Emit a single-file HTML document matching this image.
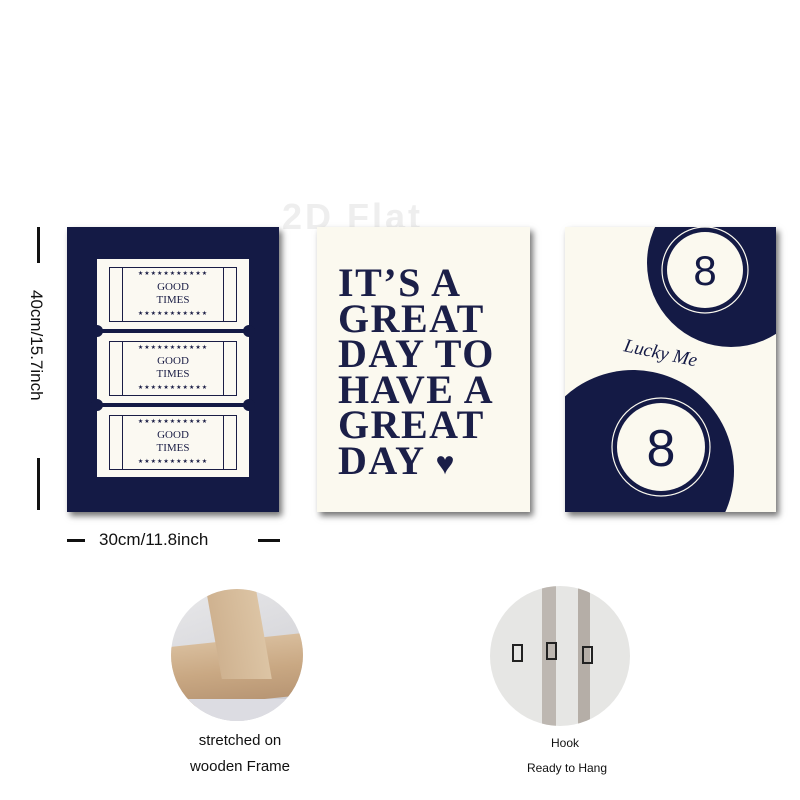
<!DOCTYPE html>
<html><head><meta charset="utf-8"><style>
body{margin:0;width:800px;height:800px;background:#fff;position:relative;overflow:hidden;font-family:"Liberation Sans",sans-serif}
.a{position:absolute}
.panel{position:absolute;top:227px;height:285px;box-shadow:3px 4px 6px rgba(0,0,0,.55)}
.tk{position:absolute;left:30px;width:152px;height:70px;background:#fbf9f2}
.tk .in{position:absolute;left:12px;top:8px;width:126px;height:53px;border:1px solid #1a1d45}
.tk .l{position:absolute;left:12px;top:8px;width:13px;height:55px;border-right:1px solid #1a1d45}
.tk .r{position:absolute;right:12px;top:8px;width:13px;height:55px;border-left:1px solid #1a1d45}
.tk .st{position:absolute;left:0;width:152px;text-align:center;font-size:6px;letter-spacing:1px;color:#1a1d45}
.tk .gt{position:absolute;left:0;top:22px;width:152px;text-align:center;font:11px/13px "Liberation Serif",serif;color:#1a1d45}
.notch{position:absolute;width:12px;height:12px;border-radius:50%;background:#141a45}
.hl{font:bold 40px/35.5px "Liberation Serif",serif;color:#1b1f48;letter-spacing:1.5px}
</style></head><body>
<div class="a" style="left:282px;top:196px;font:bold 36px 'Liberation Sans';color:#eee;letter-spacing:3px">2D Flat</div>

<div class="a" style="left:37px;top:227px;width:3px;height:36px;background:#111"></div>
<div class="a" style="left:37px;top:458px;width:3px;height:52px;background:#111"></div>
<div class="a" style="transform:rotate(90deg);transform-origin:0 0;font-size:17px;color:#111;white-space:nowrap;left:46px;top:290px">40cm/15.7inch</div>
<div class="a" style="left:67px;top:539px;width:18px;height:3px;background:#111"></div>
<div class="a" style="left:258px;top:539px;width:22px;height:3px;background:#111"></div>
<div class="a" style="left:99px;top:530px;font-size:17px;color:#111">30cm/11.8inch</div>

<div class="panel" style="left:67px;width:212px;background:#141a45">
 <div class="tk" style="top:32px"><div class="in"></div><div class="l"></div><div class="r"></div><div class="st" style="top:11px">★★★★★★★★★★★</div><div class="gt">GOOD<br>TIMES</div><div class="st" style="top:51px">★★★★★★★★★★★</div></div>
 <div class="tk" style="top:106px"><div class="in"></div><div class="l"></div><div class="r"></div><div class="st" style="top:11px">★★★★★★★★★★★</div><div class="gt">GOOD<br>TIMES</div><div class="st" style="top:51px">★★★★★★★★★★★</div></div>
 <div class="tk" style="top:180px"><div class="in"></div><div class="l"></div><div class="r"></div><div class="st" style="top:11px">★★★★★★★★★★★</div><div class="gt">GOOD<br>TIMES</div><div class="st" style="top:51px">★★★★★★★★★★★</div></div>
 <div class="a" style="left:30px;top:102px;width:152px;height:4px;background:#141a45"></div>
 <div class="a" style="left:30px;top:176px;width:152px;height:4px;background:#141a45"></div>
 <div class="notch" style="left:24px;top:98px"></div><div class="notch" style="left:176px;top:98px"></div>
 <div class="notch" style="left:24px;top:172px"></div><div class="notch" style="left:176px;top:172px"></div>
</div>

<div class="panel" style="left:317px;width:213px;background:#fbf9ef">
 <div class="hl" style="position:absolute;left:21px;top:38px">IT’S A<br>GREAT<br>DAY TO<br>HAVE A<br>GREAT<br>DAY <span style="font-size:32px">♥</span></div>
</div>

<div class="panel" style="left:565px;width:211px;background:#fbf9ef;overflow:hidden">
 <svg width="211" height="285" style="position:absolute;left:0;top:0">
  <circle cx="166" cy="36" r="84" fill="#141a45"/>
  <circle cx="140" cy="43" r="38" fill="#fbf9ef"/>
  <circle cx="140" cy="43" r="43" fill="none" stroke="#fbf9ef" stroke-width="1.2"/>
  <text x="140" y="58" text-anchor="middle" font-family="Liberation Sans" font-size="42" fill="#141a45">8</text>
  <circle cx="68" cy="244" r="101" fill="#141a45"/>
  <circle cx="96" cy="220" r="44" fill="#fbf9ef"/>
  <circle cx="96" cy="220" r="49" fill="none" stroke="#fbf9ef" stroke-width="1.2"/>
  <text x="96" y="239" text-anchor="middle" font-family="Liberation Sans" font-size="52" fill="#141a45">8</text>
  <text x="58" y="124" font-family="Liberation Serif" font-style="italic" font-size="19" fill="#141a45" transform="rotate(12 58 124)">Lucky Me</text>
 </svg>
</div>

<div class="a" style="left:171px;top:589px;width:132px;height:132px;border-radius:50%;overflow:hidden;background:linear-gradient(160deg,#e8e8ea 0%,#d6d6da 60%,#c9c9cf 100%)">
 <div class="a" style="left:0;top:50px;width:150px;height:62px;background:linear-gradient(180deg,#d8bd9c,#c9a883 50%,#b89674);transform:skewY(-6deg)"></div>
 <div class="a" style="left:42px;top:-10px;width:50px;height:100px;background:linear-gradient(90deg,#cfb290,#dcc4a4);transform:skewX(10deg)"></div>
 <div class="a" style="left:0;top:110px;width:132px;height:30px;background:#dcdce2"></div>
</div>
<div class="a" style="left:490px;top:586px;width:140px;height:140px;border-radius:50%;overflow:hidden;background:#e6e6e4">
 <div class="a" style="left:52px;top:0;width:14px;height:140px;background:#bdb7b1"></div>
 <div class="a" style="left:88px;top:0;width:12px;height:140px;background:#b5aea7"></div>
 <div class="a" style="left:22px;top:58px;width:7px;height:14px;border:2px solid #222"></div>
 <div class="a" style="left:56px;top:56px;width:7px;height:14px;border:2px solid #222"></div>
 <div class="a" style="left:92px;top:60px;width:7px;height:14px;border:2px solid #222"></div>
</div>
<div class="a" style="left:170px;top:728px;width:140px;text-align:center;font-size:15px;line-height:26px;color:#111">stretched on<br>wooden Frame</div>
<div class="a" style="left:500px;top:736px;width:130px;text-align:center;font-size:12px;color:#111">Hook</div>
<div class="a" style="left:500px;top:761px;width:134px;text-align:center;font-size:12px;color:#111">Ready to Hang</div>
</body></html>
